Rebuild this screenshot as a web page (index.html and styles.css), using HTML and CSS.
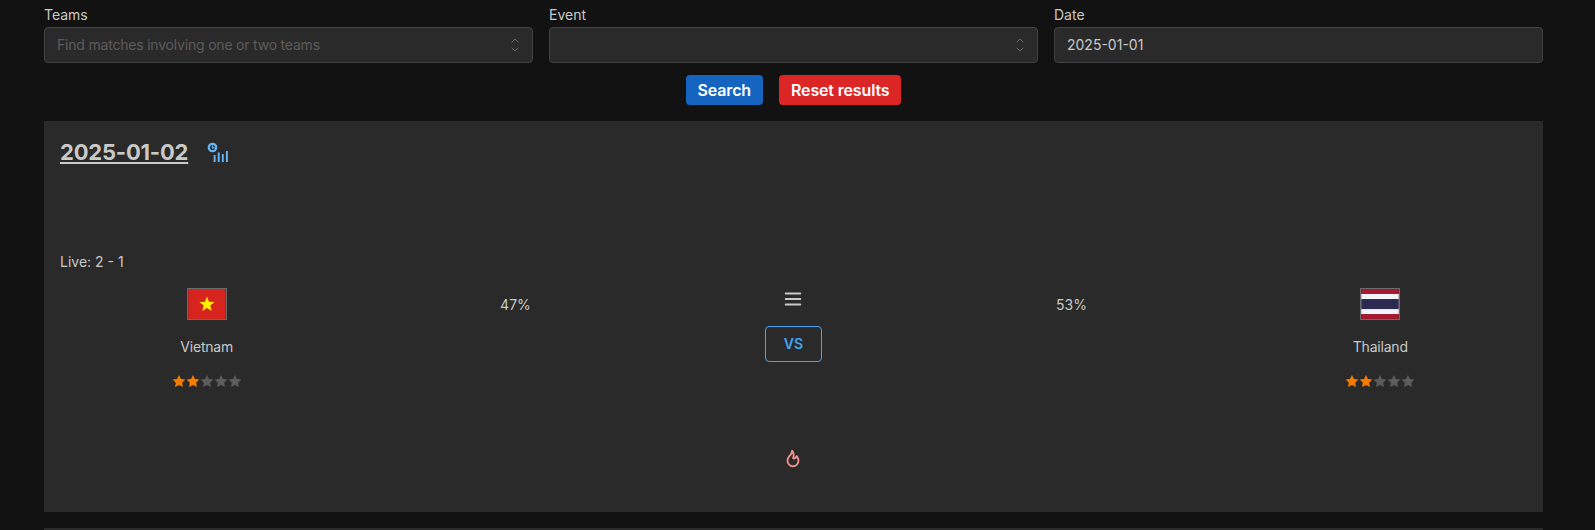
FILE: index.html
```html
<!DOCTYPE html>
<html lang="en">
<head>
    <meta charset="UTF-8">
    <meta name="viewport" content="width=device-width, initial-scale=1.0">
    <title>Matches</title>
    <link rel="stylesheet" href="styles.css">
</head>
<body>
    <div class="container">
        <div class="filters">
            <div class="field">
                <label>Teams</label>
                <div class="input placeholder">
                    Find matches involving one or two teams
                    <svg class="chevron" viewBox="0 0 16 16"><path d="M4.700 5.200L8 2l3.300 3.200M4.700 10.800L8 14l3.300-3.200"/></svg>
                </div>
            </div>
            <div class="field">
                <label>Event</label>
                <div class="input">
                    <svg class="chevron" viewBox="0 0 16 16"><path d="M4.700 5.200L8 2l3.300 3.200M4.700 10.800L8 14l3.300-3.200"/></svg>
                </div>
            </div>
            <div class="field">
                <label>Date</label>
                <div class="input">2025-01-01</div>
            </div>
        </div>

        <div class="actions">
            <button class="btn btn-blue">Search</button>
            <button class="btn btn-red">Reset results</button>
        </div>

        <div class="card">
            <div class="card-head">
                <a class="card-date">2025-01-02</a>
                <svg class="stats-icon" width="24" height="24" viewBox="0 0 24 24">
                    <circle cx="6.500" cy="7.500" r="3.700" stroke-width="2.300"/>
                    <path d="M6.500 5.600v2.200h2" stroke-width="1.300"/>
                    <path d="M8.600 22v-7M12.700 22v-9.500M16.800 22v-8M20.900 22v-11" stroke-width="1.900"/>
                </svg>
            </div>

            <div class="live">Live: 2 - 1</div>

            <div class="match">
                <div class="team">
                    <svg class="flag" width="40" height="32" viewBox="0 0 40 32">
                        <rect width="40" height="32" fill="#d8241f"/>
                        <polygon points="20,8 22.170,13.500 28.100,13.870 23.520,17.640 25,23.400 20,20.200 15,23.400 16.480,17.640 11.900,13.870 17.830,13.500" fill="#ffef00"/>
                    </svg>
                    <div class="team-name">Vietnam</div>
                    <div class="stars">
                        <svg class="star on" viewBox="1 0.500 22 22"><path d="M12 17.750l-6.172 3.245l1.179 -6.873l-5 -4.867l6.900 -1l3.086 -6.253l3.086 6.253l6.900 1l-5 4.867l1.179 6.873z"/></svg>
                        <svg class="star on" viewBox="1 0.500 22 22"><path d="M12 17.750l-6.172 3.245l1.179 -6.873l-5 -4.867l6.900 -1l3.086 -6.253l3.086 6.253l6.900 1l-5 4.867l1.179 6.873z"/></svg>
                        <svg class="star" viewBox="1 0.500 22 22"><path d="M12 17.750l-6.172 3.245l1.179 -6.873l-5 -4.867l6.900 -1l3.086 -6.253l3.086 6.253l6.900 1l-5 4.867l1.179 6.873z"/></svg>
                        <svg class="star" viewBox="1 0.500 22 22"><path d="M12 17.750l-6.172 3.245l1.179 -6.873l-5 -4.867l6.900 -1l3.086 -6.253l3.086 6.253l6.900 1l-5 4.867l1.179 6.873z"/></svg>
                        <svg class="star" viewBox="1 0.500 22 22"><path d="M12 17.750l-6.172 3.245l1.179 -6.873l-5 -4.867l6.900 -1l3.086 -6.253l3.086 6.253l6.900 1l-5 4.867l1.179 6.873z"/></svg>
                    </div>
                </div>

                <div class="percent percent-left">47%</div>

                <div class="middle">
                    <svg class="menu-icon" width="22" height="22" viewBox="0 0 24 24"><path d="M4 6h16M4 12h16M4 18h16"/></svg>
                    <div class="vs">VS</div>
                    <svg class="flame-icon" width="22" height="22" viewBox="0 0 24 24"><path d="M12 12c2 -2.960 0 -7 -1 -8c0 3.038 -1.773 4.741 -3 6c-1.226 1.260 -2 3.240 -2 5a6 6 0 1 0 12 0c0 -1.532 -1.056 -3.940 -2 -5c-1.786 3 -2.791 3 -4 2z"/></svg>
                </div>

                <div class="percent percent-right">53%</div>

                <div class="team">
                    <svg class="flag" width="40" height="32" viewBox="0 0 40 32">
                        <rect width="40" height="32" fill="#a51931"/>
                        <rect y="5.300" width="40" height="21.400" fill="#f4f5f8"/>
                        <rect y="10.700" width="40" height="10.700" fill="#2b2a50"/>
                    </svg>
                    <div class="team-name">Thailand</div>
                    <div class="stars">
                        <svg class="star on" viewBox="1 0.500 22 22"><path d="M12 17.750l-6.172 3.245l1.179 -6.873l-5 -4.867l6.900 -1l3.086 -6.253l3.086 6.253l6.900 1l-5 4.867l1.179 6.873z"/></svg>
                        <svg class="star on" viewBox="1 0.500 22 22"><path d="M12 17.750l-6.172 3.245l1.179 -6.873l-5 -4.867l6.900 -1l3.086 -6.253l3.086 6.253l6.900 1l-5 4.867l1.179 6.873z"/></svg>
                        <svg class="star" viewBox="1 0.500 22 22"><path d="M12 17.750l-6.172 3.245l1.179 -6.873l-5 -4.867l6.900 -1l3.086 -6.253l3.086 6.253l6.900 1l-5 4.867l1.179 6.873z"/></svg>
                        <svg class="star" viewBox="1 0.500 22 22"><path d="M12 17.750l-6.172 3.245l1.179 -6.873l-5 -4.867l6.900 -1l3.086 -6.253l3.086 6.253l6.900 1l-5 4.867l1.179 6.873z"/></svg>
                        <svg class="star" viewBox="1 0.500 22 22"><path d="M12 17.750l-6.172 3.245l1.179 -6.873l-5 -4.867l6.900 -1l3.086 -6.253l3.086 6.253l6.900 1l-5 4.867l1.179 6.873z"/></svg>
                    </div>
                </div>
            </div>
        </div>

        <div class="card card-next"></div>
    </div>
</body>
</html>
```

FILE: styles.css
```css
html, body {
    height: 530px;
    overflow: hidden;
}
body {
    margin: 0;
    background-color: #121212;
    color: #c9c9c9;
    font-family: Inter, "Noto Sans", sans-serif;
    font-size: 14px;
    line-height: 22px;
}
.container {
    padding: 4px 52px 0 44px;
}
.filters {
    display: grid;
    grid-template-columns: repeat(3, 1fr);
    gap: 16px;
}
.field label {
    display: block;
    height: 23px;
}
.input {
    display: flex;
    align-items: center;
    justify-content: space-between;
    box-sizing: border-box;
    height: 36px;
    padding: 0 9px 0 12px;
    background-color: #2a2a2a;
    border: 1px solid #424242;
    border-radius: 4px;
}
.input .chevron {
    margin-left: auto;
}
.placeholder {
    color: #5c5c5c;
    letter-spacing: -0.2px;
}
.chevron {
    width: 16px;
    height: 16px;
    fill: none;
    stroke: #6e6e6e;
}
.actions {
    display: flex;
    justify-content: center;
    gap: 16px;
    margin: 12px 0 16px;
}
.btn {
    height: 30px;
    padding: 0 12px;
    border: none;
    border-radius: 4px;
    color: white;
    font-family: inherit;
    font-size: 16px;
    font-weight: 600;
    letter-spacing: -0.15px;
}
.btn-blue {
    background-color: #1565c0;
}
.btn-red {
    background-color: #dc2626;
}
.card {
    box-sizing: border-box;
    height: 391px;
    padding: 16px;
    background-color: #2a2a2a;
}
.card-next {
    margin-top: 16px;
}
.card-head {
    display: flex;
    align-items: center;
    height: 30px;
}
.card-date {
    font-size: 22px;
    font-weight: 700;
    line-height: 30px;
    letter-spacing: -0.2px;
    text-decoration: underline;
}
.stats-icon {
    margin-left: 18px;
    fill: none;
    stroke: #64b5f6;
}
.live {
    margin-top: 84px;
}
.match {
    display: grid;
    grid-template-columns: repeat(5, 1fr);
    margin-top: 15px;
}
.team {
    display: flex;
    flex-direction: column;
    align-items: center;
}
.flag {
    box-sizing: border-box;
    border: 1px solid #6b6b6b;
}
.team-name {
    margin-top: 16px;
    letter-spacing: -0.2px;
}
.stars {
    display: flex;
    margin-top: 16px;
}
.star {
    width: 14px;
    height: 14px;
    fill: #5c5c5c;
}
.star.on {
    fill: #f57c00;
}
.percent {
    margin-top: 6px;
}
.percent-left {
    padding-left: 50%;
}
.percent-right {
    padding-right: 50%;
    text-align: right;
}
.middle {
    display: flex;
    flex-direction: column;
    align-items: center;
}
.menu-icon {
    fill: none;
    stroke: #c9c9c9;
    stroke-width: 2;
    stroke-linecap: round;
}
.vs {
    display: flex;
    align-items: center;
    justify-content: center;
    box-sizing: border-box;
    width: 57px;
    height: 36px;
    margin-top: 16px;
    border: 1px solid #42a5f5;
    border-radius: 4px;
    color: #42a5f5;
    font-weight: 600;
}
.flame-icon {
    margin-top: 85px;
    fill: none;
    stroke: #f98f8f;
    stroke-width: 2;
    stroke-linecap: round;
    stroke-linejoin: round;
}
```
